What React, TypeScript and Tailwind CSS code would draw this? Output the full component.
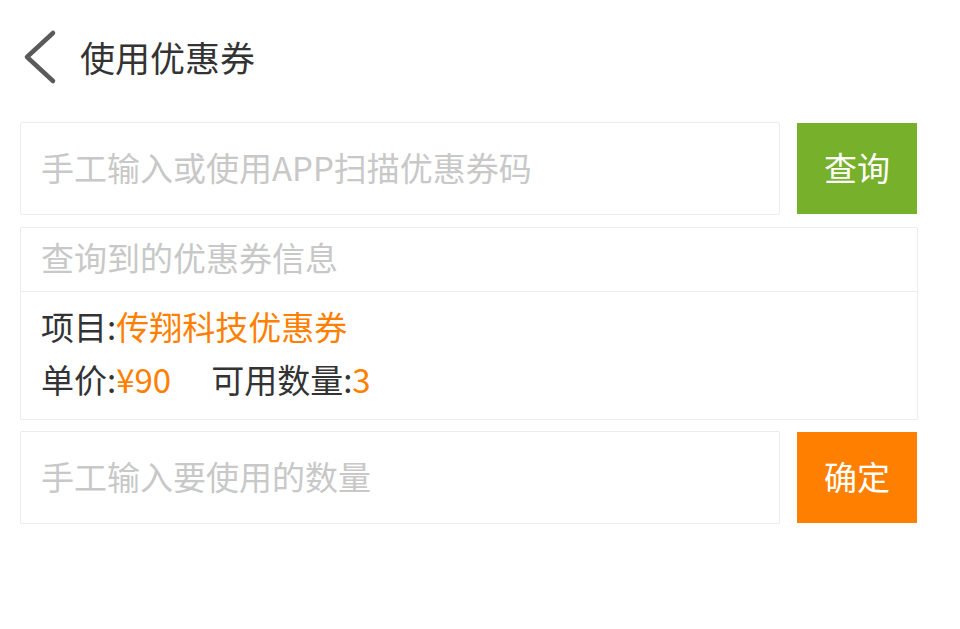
export default function App() {
  return (
    <div
      className="w-[960px] h-[629px] bg-white text-[#333]"
      style={{ fontFamily: '"Noto Sans CJK SC", "Noto Sans", sans-serif' }}
    >
      {/* header */}
      <div className="flex items-center h-[114px] pl-5">
        <svg width="40" height="60" viewBox="0 0 40 60" className="shrink-0">
          <polyline
            points="33,6 7,30 33,54"
            fill="none"
            stroke="#5a5a5a"
            strokeWidth="4.5"
            strokeLinecap="round"
            strokeLinejoin="round"
          />
        </svg>
        <h1 className="ml-[20px] pb-[2px] text-[35px] font-normal leading-none text-[#333]">使用优惠券</h1>
      </div>

      <div className="mt-2 pl-5 pr-[43px] flex flex-col">
        {/* coupon code row */}
        <div className="flex items-center gap-[17px]">
          <input
            className="flex-1 h-[93px] border border-[#ececec] rounded-[2px] pl-5 pb-[4px] text-[33px] outline-none placeholder:text-[#c8c8c8]"
            placeholder="手工输入或使用APP扫描优惠券码"
          />
          <button className="w-[120px] h-[91px] bg-[#77b02a] text-white text-[33px] leading-none pb-[2px]">
            查询
          </button>
        </div>

        {/* coupon info */}
        <div className="mt-3 w-[898px] border border-[#ececec] rounded-[2px]">
          <div className="h-[64px] flex items-center px-5 pb-[3px] border-b border-[#ececec] text-[33px] text-[#c8c8c8]">
            查询到的优惠券信息
          </div>
          <div className="px-5 pt-[8px] pb-[13px] text-[33px] leading-[53px]">
            <div>
              项目:<span className="text-[#ff8000]">传翔科技优惠券</span>
            </div>
            <div className="flex">
              <span>
                单价:<span className="text-[#ff8000]">¥90</span>
              </span>
              <span className="ml-[40px]">
                可用数量:<span className="text-[#ff8000]">3</span>
              </span>
            </div>
          </div>
        </div>

        {/* quantity row */}
        <div className="mt-[11px] flex items-center gap-[17px]">
          <input
            className="flex-1 h-[93px] border border-[#ececec] rounded-[2px] pl-5 pb-[4px] text-[33px] outline-none placeholder:text-[#c8c8c8]"
            placeholder="手工输入要使用的数量"
          />
          <button className="w-[120px] h-[91px] bg-[#ff8000] text-white text-[33px] leading-none pb-[2px]">
            确定
          </button>
        </div>
      </div>
    </div>
  );
}
